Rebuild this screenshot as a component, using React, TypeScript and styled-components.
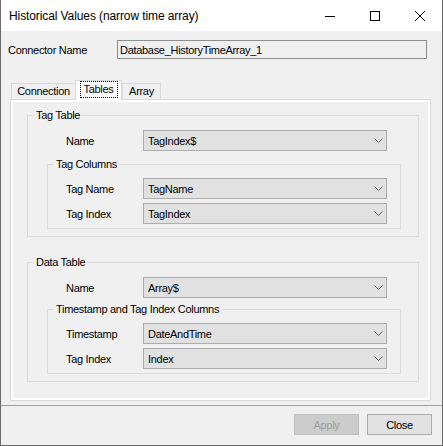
import React from "react";
import styled, { createGlobalStyle } from "styled-components";

const GlobalStyle = createGlobalStyle`
  html, body {
    margin: 0;
    padding: 0;
    background: #ffffff;
  }
  body {
    font-family: "Liberation Sans", Arial, sans-serif;
    color: #000;
  }
  * {
    box-sizing: border-box;
  }
`;

const Window = styled.div`
  width: 443px;
  height: 446px;
  display: flex;
  flex-direction: column;
  background: #f0f0f0;
  border-left: 1px solid #6b6b6b;
  border-right: 1px solid #6b6b6b;
  border-bottom: 1px solid #6b6b6b;
`;

const TitleBar = styled.div`
  height: 31px;
  flex: none;
  display: flex;
  align-items: center;
  background: #ffffff;
  padding-left: 8px;
`;

const TitleText = styled.div`
  flex: 1;
  font-size: 12px;
  letter-spacing: -0.1px;
  color: #000;
`;

const CaptionButton = styled.div`
  width: 45px;
  height: 31px;
  display: flex;
  align-items: center;
  justify-content: center;
`;

const Body = styled.div`
  flex: 1;
  display: flex;
  flex-direction: column;
  padding: 9px 0 0 7px;
  font-size: 11px;
  letter-spacing: -0.3px;
`;

const FieldRow = styled.div`
  display: flex;
  align-items: center;
  height: 19px;
`;

const FieldLabel = styled.div`
  width: 109px;
`;

const ReadOnlyBox = styled.div`
  width: 310px;
  height: 19px;
  border: 1px solid #8d8d8d;
  background: #f0f0f0;
  display: flex;
  align-items: center;
  padding-left: 2px;
`;

const TabControl = styled.div`
  margin: 21px 0 0 2px;
  width: 421px;
  display: flex;
  flex-direction: column;
`;

const TabStrip = styled.div`
  display: flex;
  align-items: flex-end;
  padding-left: 1px;
  height: 19px;
`;

const Tab = styled.div<{ $width: number; $active?: boolean }>`
  position: relative;
  width: ${(p) => p.$width}px;
  height: ${(p) => (p.$active ? 20 : 16)}px;
  margin-bottom: ${(p) => (p.$active ? -1 : 0)}px;
  margin-right: ${(p) => (p.$active ? 0 : -1)}px;
  z-index: ${(p) => (p.$active ? 2 : 1)};
  border: 1px solid #d9d9d9;
  border-bottom: none;
  background: ${(p) => (p.$active ? "#ffffff" : "#f0f0f0")};
  display: flex;
  justify-content: center;
  align-items: ${(p) => (p.$active ? "flex-start" : "center")};
  line-height: 13px;
`;

const FocusText = styled.span`
  display: inline-block;
  padding: 2px 4px;
  outline: 1px dotted #000;
  outline-offset: -1px;
  line-height: 13px;
`;

const TabPage = styled.div`
  height: 302px;
  border: 1px solid #d9d9d9;
  background: #ffffff;
  padding: 2px;
`;

const PageContent = styled.div`
  height: 100%;
  background: #f0f0f0;
  padding-top: 7px;
  display: flex;
  flex-direction: column;
`;

const Group = styled.fieldset<{ $ml: number; $mr: number; $mt?: number }>`
  margin: ${(p) => p.$mt ?? 0}px ${(p) => p.$mr}px 0 ${(p) => p.$ml}px;
  padding: 0;
  border: 1px solid #dcdcdc;
  min-width: 0;
`;

const GroupTitle = styled.legend`
  margin-left: 6px;
  padding: 0 2px;
  line-height: 13px;
  font-size: 11px;
`;

const GroupBody = styled.div<{ $pt: number; $pb: number }>`
  display: flex;
  flex-direction: column;
  gap: 4px;
  padding: ${(p) => p.$pt}px 0 ${(p) => p.$pb}px 0;
`;

const Row = styled.div<{ $indent: number }>`
  display: flex;
  align-items: center;
  height: 21px;
  padding-left: ${(p) => p.$indent}px;
`;

const RowLabel = styled.div`
  width: 77px;
`;

const ComboBox = styled.div`
  width: 244px;
  height: 21px;
  border: 1px solid #adadad;
  background: #e1e1e1;
  display: flex;
  align-items: center;
  justify-content: space-between;
  padding: 0 3px 0 4px;
`;

const Separator = styled.div`
  margin-top: 4px;
  height: 1px;
  background: #a0a0a0;
  flex: none;
`;

const Footer = styled.div`
  height: 39px;
  flex: none;
  display: flex;
  justify-content: flex-end;
  align-items: flex-start;
  gap: 8px;
  padding: 8px 10px 0 0;
`;

const DialogButton = styled.div<{ $disabled?: boolean }>`
  width: 65px;
  height: 21px;
  display: flex;
  align-items: center;
  justify-content: center;
  font-size: 11px;
  letter-spacing: -0.3px;
  border: 1px solid ${(p) => (p.$disabled ? "#bfbfbf" : "#adadad")};
  background: ${(p) => (p.$disabled ? "#cccccc" : "#e1e1e1")};
  color: ${(p) => (p.$disabled ? "#a0a0a0" : "#000")};
`;

const Chevron = () => (
  <svg width="9" height="5" viewBox="0 0 9 5">
    <polyline points="0.5,0.5 4.5,4.5 8.5,0.5" fill="none" stroke="#606060" strokeWidth="1" />
  </svg>
);

const Combo = ({ value }: { value: string }) => (
  <ComboBox>
    <span>{value}</span>
    <Chevron />
  </ComboBox>
);

const Field = ({ label, value, indent }: { label: string; value: string; indent: number }) => (
  <Row $indent={indent}>
    <RowLabel>{label}</RowLabel>
    <Combo value={value} />
  </Row>
);

export default function App() {
  return (
    <>
      <GlobalStyle />
      <Window>
        <TitleBar>
          <TitleText>Historical Values (narrow time array)</TitleText>
          <CaptionButton>
            <svg width="10" height="10" viewBox="0 0 10 10">
              <line x1="0" y1="5.5" x2="10" y2="5.5" stroke="#000" strokeWidth="1" />
            </svg>
          </CaptionButton>
          <CaptionButton>
            <svg width="10" height="10" viewBox="0 0 10 10">
              <rect x="0.5" y="0.5" width="9" height="9" fill="none" stroke="#000" strokeWidth="1" />
            </svg>
          </CaptionButton>
          <CaptionButton>
            <svg width="10" height="10" viewBox="0 0 10 10">
              <path d="M0 0 L10 10 M10 0 L0 10" stroke="#000" strokeWidth="1" />
            </svg>
          </CaptionButton>
        </TitleBar>
        <Body>
          <FieldRow>
            <FieldLabel>Connector Name</FieldLabel>
            <ReadOnlyBox>Database_HistoryTimeArray_1</ReadOnlyBox>
          </FieldRow>
          <TabControl>
            <TabStrip>
              <Tab $width={65}>Connection</Tab>
              <Tab $width={47} $active>
                <FocusText>Tables</FocusText>
              </Tab>
              <Tab $width={39}>Array</Tab>
            </TabStrip>
            <TabPage>
              <PageContent>
                <Group $ml={14} $mr={9}>
                  <GroupTitle>Tag Table</GroupTitle>
                  <GroupBody $pt={8} $pb={7}>
                    <Field label="Name" value="TagIndex$" indent={38} />
                    <Group $ml={19} $mr={17} $mt={3}>
                      <GroupTitle>Tag Columns</GroupTitle>
                      <GroupBody $pt={7} $pb={4}>
                        <Field label="Tag Name" value="TagName" indent={18} />
                        <Field label="Tag Index" value="TagIndex" indent={18} />
                      </GroupBody>
                    </Group>
                  </GroupBody>
                </Group>
                <Group $ml={14} $mr={9} $mt={19}>
                  <GroupTitle>Data Table</GroupTitle>
                  <GroupBody $pt={8} $pb={7}>
                    <Field label="Name" value="Array$" indent={38} />
                    <Group $ml={19} $mr={17} $mt={1}>
                      <GroupTitle>Timestamp and Tag Index Columns</GroupTitle>
                      <GroupBody $pt={7} $pb={4}>
                        <Field label="Timestamp" value="DateAndTime" indent={18} />
                        <Field label="Tag Index" value="Index" indent={18} />
                      </GroupBody>
                    </Group>
                  </GroupBody>
                </Group>
              </PageContent>
            </TabPage>
          </TabControl>
        </Body>
        <Separator />
        <Footer>
          <DialogButton $disabled>Apply</DialogButton>
          <DialogButton>Close</DialogButton>
        </Footer>
      </Window>
    </>
  );
}
